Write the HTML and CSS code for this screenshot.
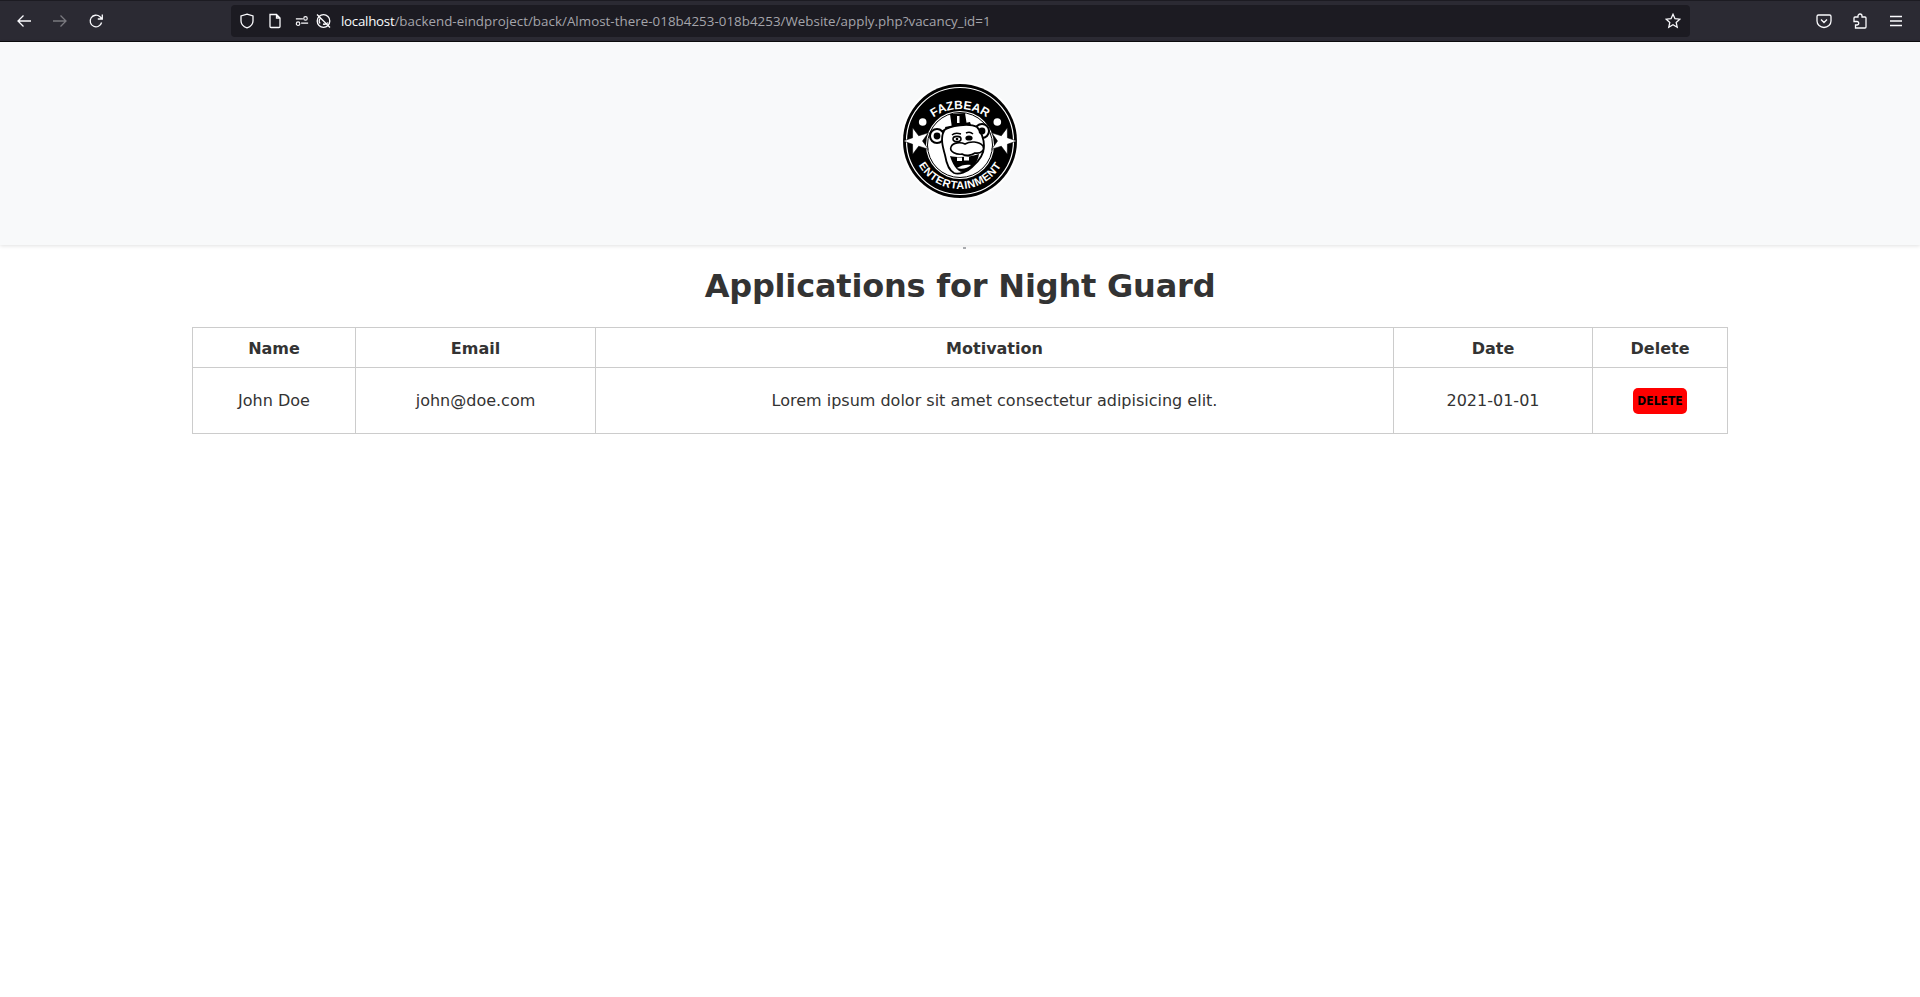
FILE: index.html
```html
<!DOCTYPE html>
<html lang="en">
<head>
<meta charset="utf-8">
<title>Applications for Night Guard</title>
<link rel="stylesheet" href="styles.css">
</head>
<body>
<div class="browser">
  <div class="nav-btns">
    <svg class="ico" viewBox="0 0 16 16"><path d="M15 8H2M7.500 2.500 2 8l5.500 5.500"/></svg>
    <svg class="ico dim" viewBox="0 0 16 16"><path d="M1 8h13M8.500 2.500 14 8l-5.500 5.500"/></svg>
    <svg class="ico" viewBox="0 0 16 16"><path d="M13.600 9.500A5.800 5.800 0 1 1 12 3.800L14 5.800M14.300 1.500v4.500H9.800"/></svg>
  </div>
  <div class="urlbar">
    <svg class="ico" viewBox="0 0 16 16"><path d="M8 1.200 14 3v5c0 3.500-3 5.800-6 6.900C5 13.800 2 11.500 2 8V3z"/></svg>
    <svg class="ico page" viewBox="0 0 16 16"><path d="M3 1.500h6.500L13 5v8.500a1 1 0 0 1-1 1H4a1 1 0 0 1-1-1zM9.500 1.500V5H13"/></svg>
    <svg class="ico perm" viewBox="0 0 16 16"><path d="M1 5.500h8M7 10.500h8"/><circle cx="12" cy="5" r="2"/><circle cx="3.500" cy="11" r="2"/></svg>
    <svg class="ico block" viewBox="0 0 16 16"><circle cx="8.500" cy="8" r="6.300"/><path d="M2 1.500 15 14.500M5 5.500c-1 1.500-1 3.500 0 5M8 11c2 .5 4 0 5-1.500"/></svg>
    <span class="url"><span class="host">localhost</span>/backend-eindproject/back/Almost-there-018b4253-018b4253/Website/apply.php?vacancy_id=1</span>
    <svg class="ico star" viewBox="0 0 16 16"><path d="M8 1.300 10 5.700l4.800.5-3.600 3.200 1 4.800L8 11.800l-4.200 2.400 1-4.800L1.200 6.200 6 5.700z"/></svg>
  </div>
  <div class="tools">
    <svg class="ico" viewBox="0 0 16 16"><path d="M2.500 2h11A1.500 1.500 0 0 1 15 3.500V8a7 6.500 0 0 1-14 0V3.500A1.500 1.500 0 0 1 2.500 2zM5 6.500 8 9.500l3-3"/></svg>
    <svg class="ico" viewBox="0 0 16 16"><path d="M6 4V3a2 2 0 0 1 4 0v1h3a1 1 0 0 1 1 1v9a1 1 0 0 1-1 1H3.500v-3H5a1.700 1.700 0 0 0 0-3.500H2V5a1 1 0 0 1 1-1z"/></svg>
    <svg class="ico" viewBox="0 0 16 16"><path d="M2 3.500h12M2 8h12M2 12.500h12"/></svg>
  </div>
</div>
<header class="site-header">
  <svg class="logo" viewBox="0 0 120 120">
    <defs>
      <path id="arc-top" d="M14 74a46 46 0 0 1 92 0"/>
      <path id="arc-bot" d="M12 60a48 48 0 0 0 96 0"/>
    </defs>
    <circle cx="60" cy="60" r="59" fill="#fff"/>
    <circle cx="60" cy="60" r="57" fill="#000"/>
    <circle cx="60" cy="60" r="53.500" fill="none" stroke="#fff" stroke-width="1.200"/>
    <circle cx="60" cy="64" r="34" fill="#fff"/>
    <circle cx="60" cy="64" r="32.500" fill="#fff" stroke="#000" stroke-width="1"/>
    <circle cx="22.700" cy="41" r="3.800" fill="#fff"/>
    <circle cx="97.300" cy="41" r="3.800" fill="#fff"/>
    <path d="M3 60 12.550 56.770 12.670 46.690 18.700 54.770 28.330 51.770 22.500 60 28.330 68.230 18.700 65.230 12.670 73.310 12.550 63.230z" fill="#fff" stroke="#000" stroke-width=".6"/>
    <path d="M117 60 107.450 56.770 107.330 46.690 101.300 54.770 91.670 51.770 97.500 60 91.670 68.230 101.300 65.230 107.330 73.310 107.450 63.230z" fill="#fff" stroke="#000" stroke-width=".6"/>
    <text class="logo-text" font-size="12" fill="#fff"><textPath href="#arc-top" startOffset="50%" text-anchor="middle">FAZBEAR</textPath></text>
    <text class="logo-text" font-size="11" fill="#fff" letter-spacing=".5"><textPath href="#arc-bot" startOffset="50%" text-anchor="middle">ENTERTAINMENT</textPath></text>
    <path d="M50 33 65 32 67 45 52 47z" fill="#000"/>
    <path d="M45 46 70 41 71 44 46 49z" fill="#000"/>
    <path d="M57 35h2.500v7H57z" fill="#fff"/>
    <g stroke="#000" stroke-width="2" fill="#fff">
      <circle cx="37" cy="55" r="7"/>
      <circle cx="82" cy="50" r="7"/>
      <path d="M43 50C50 44 70 42 77 46c4 4 7 12 7 19 0 10-6 16-12 21-5 5-13 8-18 6-6-3-8-12-9-18-2-7-5-17-1-24z" stroke-width="1.800"/>
    </g>
    <circle cx="37" cy="55" r="3.400" fill="#000"/>
    <circle cx="82" cy="50" r="3.400" fill="#000"/>
    <ellipse cx="57" cy="58" rx="4" ry="2.600" fill="#fff" stroke="#000" stroke-width="1.600"/>
    <circle cx="57" cy="58" r="1.300" fill="#000"/>
    <path d="M52 54c2-2 6-2 9-1M66 52c2-1 5-1 7 1" fill="none" stroke="#000" stroke-width="1.400"/>
    <ellipse cx="69" cy="57" rx="3.600" ry="2.600" fill="#000"/>
    <path d="M51 66c2-5 10-5 14-3 5-3 14-3 18 2 2 4-2 8-8 7-4 3-10 3-13 1-5 1-13-2-11-7z" fill="#fff" stroke="#000" stroke-width="1.600"/>
    <path d="M50 75c8 2 21 1 29-2-1 9-8 16-15 18-7 1-12-9-14-16z" fill="#000"/>
    <path d="M57 76.500h5v3.500h-5zM64 76h5v3.500h-5z" fill="#fff"/>
    <path d="M57 87c4-3 10-4 14-3-3 3-9 5-14 3z" fill="#fff"/>
  </svg>
</header>
<main class="content">
  <span class="tick"></span>
  <h1 class="title">Applications for Night Guard</h1>
  <table class="apps">
    <thead>
      <tr><th class="c-name">Name</th><th class="c-email">Email</th><th class="c-mot">Motivation</th><th class="c-date">Date</th><th class="c-del">Delete</th></tr>
    </thead>
    <tbody>
      <tr>
        <td>John Doe</td>
        <td>john@doe.com</td>
        <td>Lorem ipsum dolor sit amet consectetur adipisicing elit.</td>
        <td>2021-01-01</td>
        <td><button class="del" type="button">DELETE</button></td>
      </tr>
    </tbody>
  </table>
</main>
</body>
</html>
```
FILE: styles.css
```css
* { box-sizing: border-box; }
html, body { margin: 0; padding: 0; }
body { background: #fff; color: #333; font-family: "DejaVu Sans", sans-serif; font-size: 16px; }

.browser {
  height: 42px;
  display: flex;
  align-items: center;
  background: #2b2a33;
  border-top: 1px solid #1c1b22;
  border-bottom: 1px solid #0c0c0d;
}
.ico { width: 16px; height: 16px; fill: none; stroke: #fbfbfe; stroke-width: 1.300; flex: none; }
.ico.dim { stroke: #7a797f; }
.nav-btns { display: flex; gap: 20px; padding-left: 16px; width: 231px; }
.urlbar {
  width: 1459px;
  height: 32px;
  display: flex;
  align-items: center;
  background: #1c1b22;
  border-radius: 4px;
  padding: 0 9px 0 8px;
}
.page { margin-left: 12px; }
.perm { margin-left: 12px; width: 14px; height: 14px; }
.block { margin-left: 6px; }
.url {
  margin-left: 10px;
  flex: 1;
  font: 13.330px "Open Sans", sans-serif;
  letter-spacing: .04px;
  color: #a5a5ab;
  white-space: nowrap;
}
.host { color: #fbfbfe; letter-spacing: -.27px; }
.tools { flex: 1; display: flex; justify-content: flex-end; gap: 20px; padding-right: 16px; }

.site-header {
  height: 203px;
  padding-bottom: 6px;
  background: #f8f9fa;
  box-shadow: 0 1px 4px rgba(0, 0, 0, .12);
  display: flex;
  align-items: center;
  justify-content: center;
}
.logo { width: 120px; height: 120px; display: block; }
.logo-text { font-family: "Liberation Sans", sans-serif; font-weight: 700; }

.content { width: 1536px; margin: 0 auto; }
.tick {
  display: block;
  width: 3px;
  height: 2px;
  margin: 2px 0 0 calc(50% + 3px);
  background: #a9abaf;
}
.title {
  margin: 16px 0 20px;
  text-align: center;
  font-size: 32px;
  line-height: 42px;
  letter-spacing: -.2px;
  font-weight: 700;
  color: #333;
}
.apps { width: 1535px; border-collapse: collapse; table-layout: fixed; }
.apps th, .apps td { border: 1px solid #ccc; text-align: center; padding: 8px; }
.apps th { height: 40px; padding: 9px 8px 7px; }
.apps td { height: 66px; }
.c-name { width: 163px; }
.c-email { width: 240px; }
.c-mot { width: 798px; }
.c-date { width: 199px; }
.c-del { width: 135px; }
.del {
  width: 54px;
  height: 26px;
  padding: 0;
  border: 0;
  border-radius: 5px;
  background: #f00;
  color: #000;
  font: 700 12px "DejaVu Sans Condensed", "DejaVu Sans", sans-serif;
}
```
